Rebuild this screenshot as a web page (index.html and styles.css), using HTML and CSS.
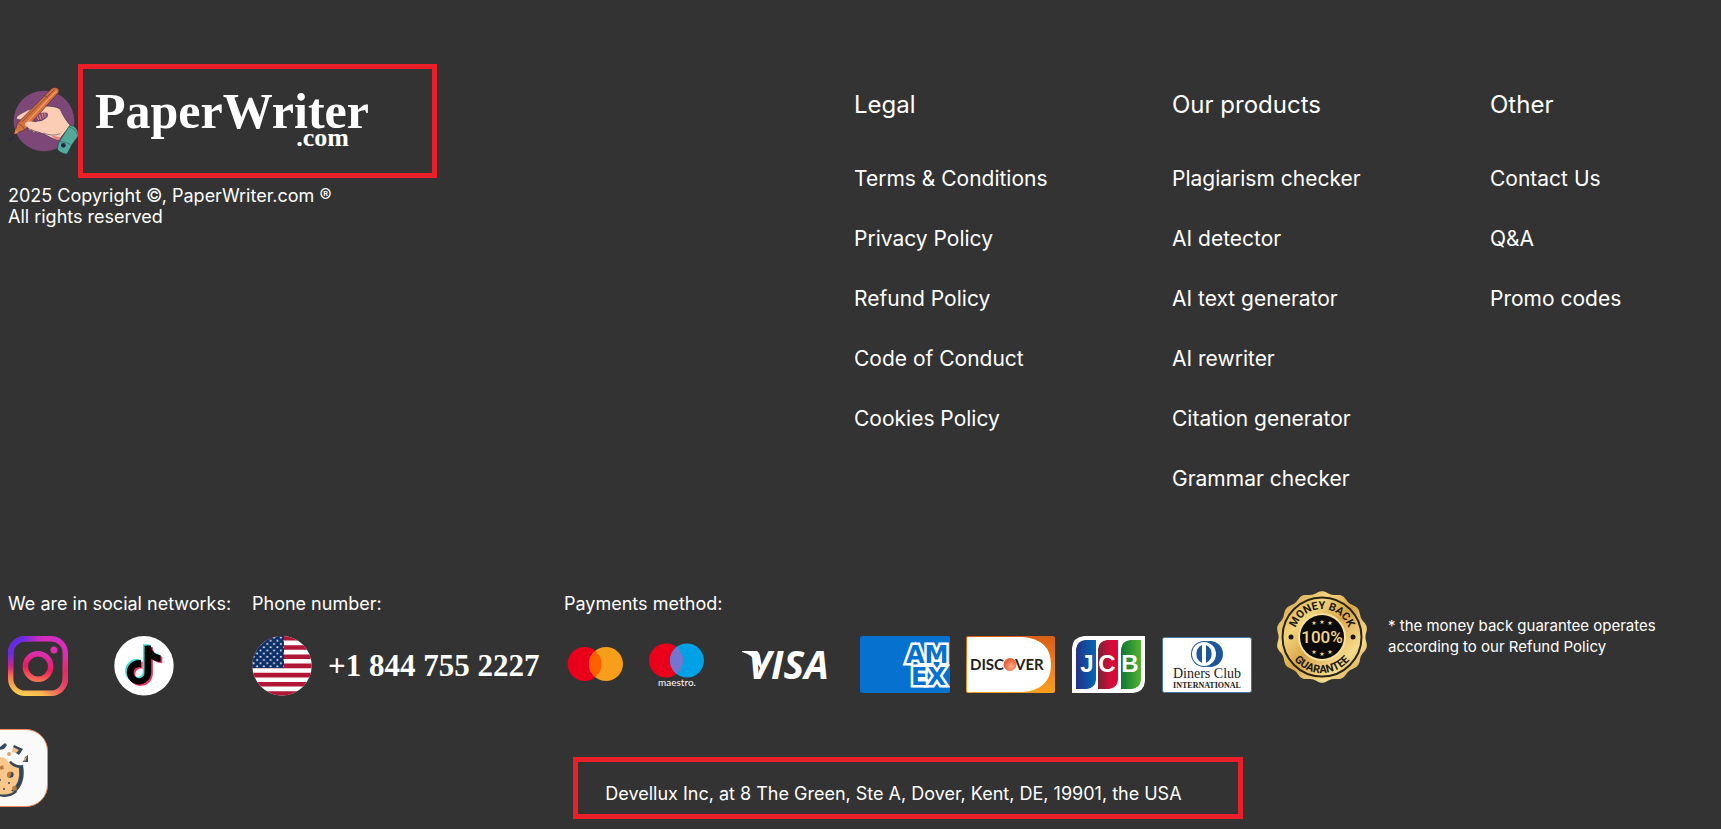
FILE: index.html
```html
<!DOCTYPE html>
<html lang="en">
<head>
    <meta charset="UTF-8">
    <meta name="viewport" content="width=device-width, initial-scale=1.0">
    <title>PaperWriter.com</title>
    <link rel="stylesheet" href="styles.css">
</head>
<body>
    <footer class="footer">
        <div class="footer-top">
            <div class="brand">
                <a href="#" class="logo" aria-label="PaperWriter.com">
                    <svg class="logo-icon" viewBox="24 42 210 216" aria-hidden="true">
                        <circle cx="132" cy="150" r="91" fill="#7d4778"/>
                        <path d="M75 172L98 183L92 172Z M82 172Q86 184 95 180Q98 188 106 182Q112 189 120 184L112 170Z" fill="#efa08c" stroke="#2c2b4c" stroke-width="1.5"/>
                        <path d="M50 144C46 136 60 130 82 118L122 104C145 106 172 105 181 116C188 132 200 152 211 163C205 176 190 186 177 208C160 206 145 194 118 184C98 178 80 173 75 162C72 150 88 148 107 153C116 150 118 142 112 136C92 136 66 152 50 144Z" fill="#fccdb5" stroke="#2c2b4c" stroke-width="1.5"/>
                        <path d="M105 136Q112 123 141 125Q150 131 135 143Q119 154 109 149Z" fill="#8b4a70"/>
                        <path d="M111 135l5 12M118 130l5 16M126 127l4 15M134 127l2 11" stroke="#f0b0a8" stroke-width="2"/>
                        <path d="M109 149Q126 154 144 134M128 186Q160 197 181 188" fill="none" stroke="#2c2b4c" stroke-width="1.5"/>
                        <path d="M154 191Q160 204 178 208L180 199Q164 196 154 191Z" fill="#e9827d"/>
                        <path d="M43 190L52 157L151 57Q158 46 172 51Q180 57 175 65L75 176Q58 183 43 190Z" fill="#d5713d" stroke="#4a2c3c" stroke-width="2"/>
                        <path d="M52 157Q65 160 75 176M134 75Q143 76 149 88M143 76L164 56M65 153L148 70" fill="none" stroke="#703b35" stroke-width="2"/>
                        <path d="M81 154L151 78L170 60" fill="none" stroke="#f19a62" stroke-width="4"/>
                        <path d="M75 162C74 151 91 149 108 154Q103 162 91 160L87 168Q78 169 75 162Z" fill="#fccdb5"/>
                        <path d="M43 190L47 174L56 185Z" fill="#e98443"/>
                        <path d="M42 190Q37 194 40 199L34 208Q24 209 29 199" fill="none" stroke="#20274c" stroke-width="3"/>
                        <path d="M207 166Q213 160 220 165Q238 175 234 196Q214 220 201 250Q178 246 172 235Q172 218 184 202Z" fill="#54aa98" stroke="#25364b" stroke-width="2"/>
                        <path d="M208 168Q231 177 231 190M176 211Q192 211 211 220" fill="none" stroke="#25675f" stroke-width="2"/>
                        <circle cx="190" cy="223" r="7" fill="#20274c"/>
                    </svg>
                    <span class="logo-box">
                        <span class="logo-text">
                            <span class="logo-name">PaperWriter</span>
                            <span class="logo-domain">.com</span>
                        </span>
                    </span>
                </a>
                <p class="copyright">2025 Copyright ©, PaperWriter.com ®<br>All rights reserved</p>
            </div>
            <nav class="links" aria-labelledby="legal">
                <h2 id="legal">Legal</h2>
                <ul>
                    <li><a href="#">Terms &amp; Conditions</a></li>
                    <li><a href="#">Privacy Policy</a></li>
                    <li><a href="#">Refund Policy</a></li>
                    <li><a href="#">Code of Conduct</a></li>
                    <li><a href="#">Cookies Policy</a></li>
                </ul>
            </nav>
            <nav class="links" aria-labelledby="products">
                <h2 id="products">Our products</h2>
                <ul>
                    <li><a href="#">Plagiarism checker</a></li>
                    <li><a href="#">AI detector</a></li>
                    <li><a href="#">AI text generator</a></li>
                    <li><a href="#">AI rewriter</a></li>
                    <li><a href="#">Citation generator</a></li>
                    <li><a href="#">Grammar checker</a></li>
                </ul>
            </nav>
            <nav class="links" aria-labelledby="other">
                <h2 id="other">Other</h2>
                <ul>
                    <li><a href="#">Contact Us</a></li>
                    <li><a href="#">Q&amp;A</a></li>
                    <li><a href="#">Promo codes</a></li>
                </ul>
            </nav>
        </div>

        <div class="footer-info">
            <div class="social">
                <h3>We are in social networks:</h3>
                <div class="social-icons">
                    <a href="#" aria-label="Instagram">
                        <svg width="60" height="60" viewBox="0 0 60 60">
                            <defs>
                                <linearGradient id="ig" gradientUnits="userSpaceOnUse" x1="36" y1="0" x2="26" y2="60">
                                    <stop offset="0" stop-color="#d42cc0"/>
                                    <stop offset=".3" stop-color="#dc2eac"/>
                                    <stop offset=".55" stop-color="#f01a5c"/>
                                    <stop offset=".8" stop-color="#f88a50"/>
                                    <stop offset="1" stop-color="#f8cc4c"/>
                                </linearGradient>
                                <radialGradient id="igBlue" gradientUnits="userSpaceOnUse" cx="2" cy="4" r="34">
                                    <stop offset="0" stop-color="#5a2bf0"/>
                                    <stop offset=".4" stop-color="#6a2be0"/>
                                    <stop offset="1" stop-color="#a02bd0" stop-opacity="0"/>
                                </radialGradient>
                                <radialGradient id="igPink" gradientUnits="userSpaceOnUse" cx="62" cy="48" r="30">
                                    <stop offset="0" stop-color="#e0366c"/>
                                    <stop offset="1" stop-color="#e0366c" stop-opacity="0"/>
                                </radialGradient>
                            </defs>
                            <g fill="none" stroke-width="5.4">
                                <rect x="2.7" y="2.7" width="54.6" height="54.6" rx="14.5" stroke="url(#ig)"/>
                                <rect x="2.7" y="2.7" width="54.6" height="54.6" rx="14.5" stroke="url(#igBlue)"/>
                                <rect x="2.7" y="2.7" width="54.6" height="54.6" rx="14.5" stroke="url(#igPink)"/>
                                <circle cx="30" cy="30.5" r="12.7" stroke="url(#ig)"/>
                            </g>
                            <circle cx="46" cy="14" r="3.5" fill="#e22fb2"/>
                        </svg>
                    </a>
                    <a href="#" aria-label="TikTok">
                        <svg width="60" height="60" viewBox="0 0 60 60">
                            <defs>
                                <path id="note" d="M12.525.02c1.31-.02 2.61-.01 3.91-.02.08 1.53.63 3.09 1.75 4.17 1.12 1.11 2.7 1.62 4.24 1.79v4.03c-1.44-.05-2.89-.35-4.2-.97-.57-.26-1.1-.59-1.62-.93-.01 2.92.01 5.84-.02 8.75-.08 1.4-.54 2.79-1.35 3.94-1.31 1.92-3.58 3.17-5.91 3.21-1.43.08-2.86-.31-4.08-1.03-2.02-1.19-3.44-3.37-3.65-5.71-.02-.5-.03-1-.01-1.49.18-1.9 1.12-3.72 2.58-4.96 1.66-1.44 3.98-2.13 6.15-1.72.02 1.48-.04 2.96-.04 4.44-.99-.32-2.15-.23-3.02.37-.63.41-1.11 1.04-1.36 1.75-.21.51-.15 1.07-.14 1.61.24 1.64 1.82 3.02 3.5 2.87 1.12-.01 2.19-.66 2.77-1.61.19-.33.4-.67.41-1.06.1-1.79.06-3.57.07-5.36.01-4.03-.01-8.05.02-12.07z"/>
                            </defs>
                            <circle cx="30" cy="29.7" r="29.7" fill="#fff"/>
                            <use href="#note" transform="translate(8.6 8.2) scale(1.62)" fill="#3fe0dc"/>
                            <use href="#note" transform="translate(12 11) scale(1.62)" fill="#f0345c"/>
                            <use href="#note" transform="translate(10.3 9.6) scale(1.62)" fill="#000"/>
                        </svg>
                    </a>
                </div>
            </div>

            <div class="phone">
                <h3>Phone number:</h3>
                <a href="tel:+18447552227" class="phone-link">
                    <svg width="60" height="60" viewBox="0 0 60 60" aria-hidden="true">
                        <defs>
                            <clipPath id="round"><circle cx="30" cy="29.7" r="29.7"/></clipPath>
                            <pattern id="stars" width="6.8" height="6.4" patternUnits="userSpaceOnUse">
                                <circle cx="1.7" cy="1.6" r="1" fill="#fff"/>
                                <circle cx="5.1" cy="4.8" r="1" fill="#fff"/>
                            </pattern>
                        </defs>
                        <g clip-path="url(#round)">
                            <rect width="60" height="60" fill="#fff"/>
                            <path d="M0 2.3h60M0 11.5h60M0 20.7h60M0 29.9h60M0 39.1h60M0 48.3h60M0 57.5h60" stroke="#b21637" stroke-width="4.6"/>
                            <rect width="32" height="32" fill="#0b2f66"/>
                            <rect width="32" height="32" fill="url(#stars)"/>
                        </g>
                    </svg>
                    <span>+1 844 755 2227</span>
                </a>
            </div>

            <div class="payments">
                <h3>Payments method:</h3>
                <div class="cards">
                    <svg width="62" height="58" viewBox="0 0 62 58" role="img" aria-label="Mastercard">
                        <circle cx="20.6" cy="28" r="17" fill="#eb001b"/>
                        <circle cx="42" cy="28" r="17" fill="#f79e1b"/>
                        <path d="M31.3 14.8a17 17 0 0 1 0 26.4a17 17 0 0 1 0-26.4z" fill="#ff5f00"/>
                    </svg>
                    <svg width="74" height="58" viewBox="0 0 74 58" role="img" aria-label="Maestro">
                        <circle cx="24" cy="24.5" r="17" fill="#eb001b"/>
                        <circle cx="45" cy="24.5" r="17" fill="#00a2e5"/>
                        <path d="M34.5 11.1a17 17 0 0 1 0 26.8a17 17 0 0 1 0-26.8z" fill="#7375cf"/>
                        <text x="35" y="50" class="maestro-text">maestro.</text>
                    </svg>
                    <svg width="112" height="58" viewBox="0 0 112 58" role="img" aria-label="Visa">
                        <path d="M10 15H23Q27 15 28 20L31 36L25 27Q21 19 10 16Z" fill="#fff"/>
                        <text x="16" y="43" class="visa-text">VISA</text>
                    </svg>
                    <svg width="90" height="58" viewBox="0 0 90 58" role="img" aria-label="American Express">
                        <defs><clipPath id="card"><rect y="0" width="90" height="57" rx="2"/></clipPath></defs>
                        <g clip-path="url(#card)">
                            <rect width="90" height="57" fill="#0671ce"/>
                            <g class="amex-text">
                                <text x="51" y="49">EX</text>
                                <text x="46" y="27">AM</text>
                            </g>
                        </g>
                    </svg>
                    <svg width="90" height="58" viewBox="0 0 90 58" role="img" aria-label="Discover">
                        <defs>
                            <linearGradient id="disc" x1="0" y1="0" x2="0" y2="1">
                                <stop offset="0" stop-color="#d95f16"/>
                                <stop offset="1" stop-color="#f9a01f"/>
                            </linearGradient>
                            <radialGradient id="ball" cx=".6" cy=".65">
                                <stop offset="0" stop-color="#fbb08a"/>
                                <stop offset="1" stop-color="#e8643c"/>
                            </radialGradient>
                        </defs>
                        <rect width="89" height="57" rx="2" fill="url(#disc)"/>
                        <path d="M2 1H56Q85 3 85 28.5T56 56H2Q1 56 1 55V2Q1 1 2 1Z" fill="#fff"/>
                        <circle cx="44" cy="28.5" r="6.5" fill="url(#ball)"/>
                        <text x="38" y="34" class="discover-text discover-left">DISC</text>
                        <text x="49" y="34" class="discover-text">VER</text>
                    </svg>
                    <svg width="74" height="58" viewBox="0 0 74 58" role="img" aria-label="JCB">
                        <defs>
                            <linearGradient id="jBlue"><stop offset="0" stop-color="#253087"/><stop offset="1" stop-color="#0069b3"/></linearGradient>
                            <linearGradient id="jRed"><stop offset="0" stop-color="#762437"/><stop offset=".6" stop-color="#d00d38"/><stop offset="1" stop-color="#e0063c"/></linearGradient>
                            <linearGradient id="jGreen"><stop offset="0" stop-color="#0b7837"/><stop offset="1" stop-color="#55b32f"/></linearGradient>
                        </defs>
                        <path d="M12 0H73V45Q72 56 61 57H0V12Q1 1 12 0Z" fill="#fff"/>
                        <path d="M13 4H24V44Q23 52 15 53H4V13Q5 5 13 4Z" fill="url(#jBlue)"/>
                        <path d="M35 4H46V44Q45 52 37 53H26V13Q27 5 35 4Z" fill="url(#jRed)"/>
                        <path d="M58 4H69V44Q68 52 60 53H49V13Q50 5 58 4Z" fill="url(#jGreen)"/>
                        <g class="jcb-text">
                            <text x="15" y="36">J</text>
                            <text x="35" y="36">C</text>
                            <text x="58" y="36">B</text>
                        </g>
                    </svg>
                    <svg width="90" height="58" viewBox="0 0 90 58" role="img" aria-label="Diners Club International">
                        <rect x=".5" y="1.5" width="89" height="55" rx="2" fill="#fff" stroke="#3f75ab"/>
                        <circle cx="48" cy="18" r="13" fill="#1d5799"/>
                        <circle cx="42" cy="18" r="13" fill="#1d5799"/>
                        <circle cx="42" cy="18" r="12" fill="#fff"/>
                        <path d="M40 9A10 10 0 0 0 40 27ZM44 9A10 10 0 0 1 44 27Z" fill="#1d5799"/>
                        <text x="45" y="42" class="diners-text">Diners Club</text>
                        <text x="45" y="52" class="diners-small">INTERNATIONAL</text>
                    </svg>
                </div>
            </div>

            <div class="guarantee">
                <svg width="92" height="92" viewBox="0 0 92 92" role="img" aria-label="100% money back guarantee">
                    <defs>
                        <linearGradient id="gold" x1="0" y1="0" x2="1" y2="1">
                            <stop offset="0" stop-color="#c8953c"/>
                            <stop offset=".3" stop-color="#f2d47c"/>
                            <stop offset=".5" stop-color="#d9a64a"/>
                            <stop offset=".75" stop-color="#f6dc8c"/>
                            <stop offset="1" stop-color="#c38e35"/>
                        </linearGradient>
                        <path id="arcTop" d="M18 46a28 28 0 0 1 56 0"/>
                        <path id="arcBottom" d="M10 46a36 36 0 0 0 72 0"/>
                    </defs>
                    <path id="badge" fill="url(#gold)"/>
                    <circle cx="46" cy="46" r="39.5" fill="none" stroke="#2a2418" stroke-width="2"/>
                    <circle cx="46" cy="46" r="24" fill="#f8e19a"/>
                    <circle cx="46" cy="46" r="22" fill="#0c0b0a"/>
                    <circle cx="15" cy="46" r="2.5" fill="#1c1811"/>
                    <circle cx="77" cy="46" r="2.5" fill="#1c1811"/>
                    <text class="seal-ring"><textPath href="#arcTop" startOffset="50%">MONEY BACK</textPath></text>
                    <text class="seal-ring"><textPath href="#arcBottom" startOffset="50%">GUARANTEE</textPath></text>
                    <text x="46" y="52" class="seal-number">100%</text>
                    <g class="seal-stars">
                        <text x="38" y="34">★</text>
                        <text x="46" y="33">★</text>
                        <text x="54" y="34">★</text>
                        <text x="38" y="63">★</text>
                        <text x="46" y="65">★</text>
                        <text x="54" y="63">★</text>
                    </g>
                </svg>
                <p>* the money back guarantee operates<br>according to our Refund Policy</p>
            </div>
        </div>

        <div class="address-row">
            <address class="address">Devellux Inc, at 8 The Green, Ste A, Dover, Kent, DE, 19901, the USA</address>
        </div>
    </footer>

    <button class="cookie-button" aria-label="Cookie settings">
        <svg width="48" height="76" viewBox="0 0 48 76">
            <path d="M-20 48Q-16 30 0 27Q7 26 10 33Q14 31 18 35L24 37Q27 52 18 60Q8 68-4 65Z" fill="#fbc68a"/>
            <path d="M12 31Q16 36 24 35Q27 52 17 62L12 61Q22 53 20 38Q13 37 10 32Z" fill="#34485c"/>
            <path d="M0 64Q10 66 17 60L18 62Q10 69 0 66Z" fill="#34485c"/>
            <path d="M14 17L23 19L20 24L13 22Z" fill="#f4be84"/>
            <path d="M15 15L24 19L20 25L17 23L20 20L14 17ZM1 17L6 13L8 15L5 19L0 20ZM26 27L29 25V32L24 32Z" fill="#34485c"/>
            <path d="M25 29L28 26L26 32Z" fill="#f4be84"/>
            <circle cx="10" cy="24" r="2" fill="#e4a25f"/>
            <path d="M9 42Q15 40 14 46L10 48Q6 46 9 42ZM13 57L17 55L18 60L14 61ZM0 37L4 35L5 39L2 40Z" fill="#b67b3e"/>
            <path d="M12 42Q16 42 14 47L10 48Q13 45 12 42Z" fill="#34485c"/>
            <g fill="#34485c"><circle cx="1" cy="50" r="1"/><circle cx="10" cy="53" r="1"/><circle cx="5" cy="59" r="1"/></g>
        </svg>
    </button>

    <script>
        // Scalloped edge of the guarantee badge
        const scallops = 14;
        let d = "";
        for (let i = 0; i <= 280; i++) {
            const angle = (i / 280) * Math.PI * 2;
            const r = 44.6 + 1.2 * Math.cos(angle * scallops);
            d += (i ? "L" : "M") + (46 + r * Math.sin(angle)).toFixed(2) + " " + (46 - r * Math.cos(angle)).toFixed(2);
        }
        document.getElementById("badge").setAttribute("d", d + "Z");
    </script>
</body>
</html>
```
FILE: styles.css
```css
* {
    box-sizing: border-box;
}
body {
    margin: 0;
    background-color: #333;
    color: #fff;
    font-family: Inter, "Liberation Sans", sans-serif;
    font-size: 18px;
    line-height: 24px;
}
h2, h3, p, ul {
    margin: 0;
    padding: 0;
    font-weight: 400;
}
a {
    color: inherit;
    text-decoration: none;
}
svg {
    display: block;
    flex: none;
}
.footer {
    padding: 64px 0 8px 8px;
}
.footer-top {
    display: grid;
    grid-template-columns: 846fr 318fr 318fr 231fr;
}

/* Logo */
.logo {
    display: flex;
    align-items: center;
}
.logo-icon {
    width: 70px;
    height: 72px;
}
.logo-box {
    flex: 0 1 359px;
    padding: 22px 12px 28px;
    border: 5px solid #ea1f27;
}
.logo-text {
    display: inline-flex;
    flex-direction: column;
    vertical-align: top;
    font-family: "Liberation Serif", serif;
    font-weight: 700;
}
.logo-name {
    font-size: 50px;
    line-height: 40px;
}
.logo-domain {
    padding-right: 20px;
    font-size: 26px;
    line-height: 14px;
    text-align: right;
}
.copyright {
    margin-top: 7px;
    line-height: 21px;
}

/* Link columns */
.links {
    padding-top: 26px;
}
.links h2 {
    margin-bottom: 29px;
    font-size: 24px;
    line-height: 30px;
}
.links ul {
    list-style: none;
}
.links li {
    font-size: 21px;
    line-height: 60px;
}

/* Social, phone, payments */
.footer-info {
    display: flex;
    gap: 24px;
    margin-top: 82px;
}
.footer-info h3 {
    margin-bottom: 19px;
    font-size: 18px;
    line-height: 26px;
}
.social {
    flex: 0 0 220px;
    min-width: 0;
    white-space: nowrap;
}
.social-icons {
    display: flex;
    gap: 46px;
}
.phone {
    flex: 0 0 288px;
}
.phone-link {
    display: flex;
    align-items: center;
    gap: 16px;
    font-family: "Liberation Serif", serif;
    font-size: 31px;
    font-weight: 700;
    white-space: nowrap;
}
.cards {
    display: flex;
    gap: 16px;
}
.maestro-text {
    fill: #fff;
    font: 400 10px Lato, sans-serif;
    text-anchor: middle;
}
.visa-text {
    fill: #fff;
    font: italic 700 39px "Open Sans", sans-serif;
}
.amex-text {
    fill: #0671ce;
    stroke: #fff;
    stroke-width: 5px;
    paint-order: stroke;
    font: 700 24px "DejaVu Sans", sans-serif;
}
.discover-text {
    fill: #231f20;
    font: 700 15px Lato, sans-serif;
}
.discover-left {
    text-anchor: end;
}
.jcb-text {
    fill: #fff;
    font: 700 24px "Liberation Sans", sans-serif;
    text-anchor: middle;
}
.diners-text {
    fill: #222;
    font: 400 14px "Liberation Serif", serif;
    text-anchor: middle;
}
.diners-small {
    fill: #222;
    font: 700 8px "Liberation Serif", serif;
    text-anchor: middle;
}

/* Guarantee */
.guarantee {
    display: flex;
    align-items: flex-start;
    gap: 20px;
    font-size: 15px;
    line-height: 21px;
    white-space: nowrap;
}
.guarantee p {
    padding-top: 24px;
}
.seal-ring {
    fill: #1c1811;
    font: 700 11px Roboto, sans-serif;
    text-anchor: middle;
}
.seal-number {
    fill: #f2d58a;
    font: 500 17px Roboto, sans-serif;
    text-anchor: middle;
}
.seal-stars {
    fill: #f2d58a;
    font: 6px "DejaVu Sans", sans-serif;
    text-anchor: middle;
}

/* Address */
.address-row {
    display: flex;
    margin-top: 61px;
    padding-left: 33%;
}
.address {
    padding: 20px 56px 8px 27px;
    border: 5px solid #ea1f27;
    font-style: normal;
}

/* Floating cookie button, partly off the left edge */
.cookie-button {
    position: fixed;
    bottom: 22px;
    left: -30px;
    display: flex;
    justify-content: flex-end;
    width: 78px;
    height: 78px;
    padding: 0;
    border: 1px solid #f08a5c;
    border-radius: 22px;
    background-color: #fafafa;
    cursor: pointer;
}
```
